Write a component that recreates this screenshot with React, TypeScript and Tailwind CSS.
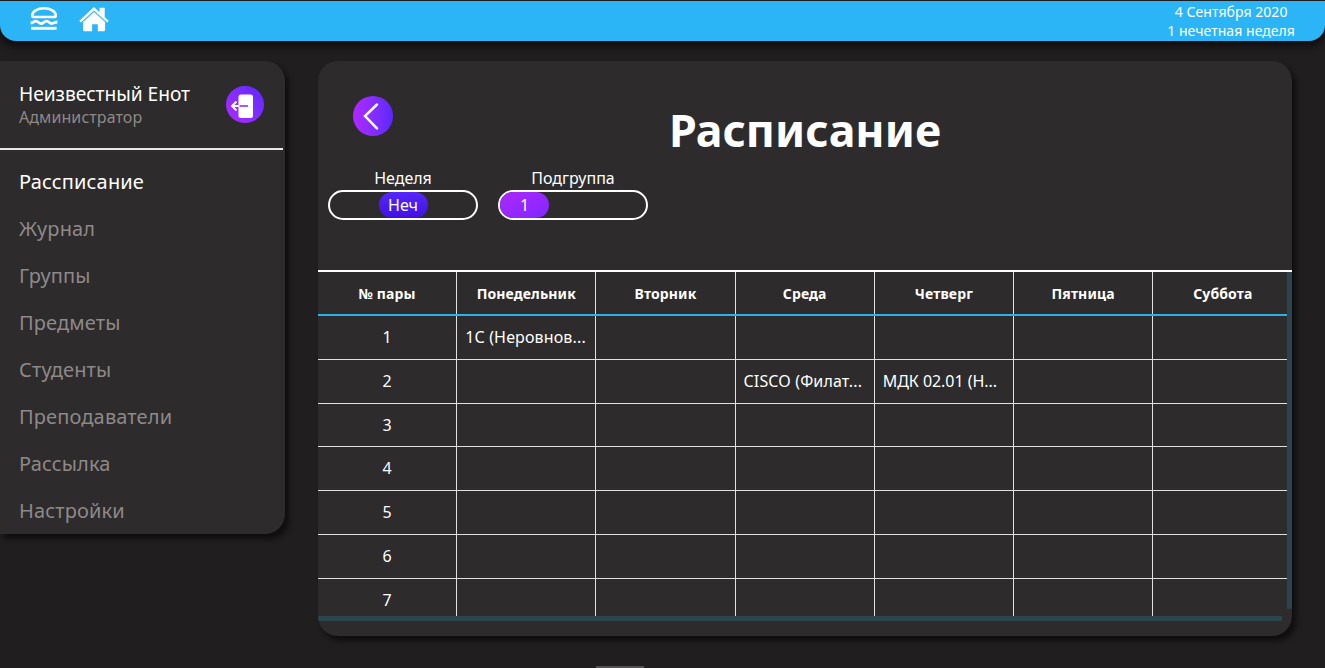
import React from 'react';

const MENU = [
  'Рассписание',
  'Журнал',
  'Группы',
  'Предметы',
  'Студенты',
  'Преподаватели',
  'Рассылка',
  'Настройки',
];

const DAYS = ['№ пары', 'Понедельник', 'Вторник', 'Среда', 'Четверг', 'Пятница', 'Суббота'];

const LESSONS: string[][] = [
  ['1С (Неровнов...', '', '', '', '', ''],
  ['', '', 'CISCO (Филат...', 'МДК 02.01 (Н...', '', ''],
  ['', '', '', '', '', ''],
  ['', '', '', '', '', ''],
  ['', '', '', '', '', ''],
  ['', '', '', '', '', ''],
  ['', '', '', '', '', ''],
];

function BurgerIcon() {
  return (
    <svg className="h-6 w-7" viewBox="0 0 28 24" fill="none" stroke="#fff">
      <path d="M2.200 9.700C2.200 5.200 7.600 2.300 14 2.300s11.800 2.900 11.800 7.400c0 .8-.6 1.300-1.500 1.300H3.700c-.9 0-1.500-.5-1.500-1.300Z" strokeWidth="2.500" />
      <path d="M.6 16.900c2.700 0 2.900-1.800 5.300-1.800s2.700 2.400 5.200 2.400 2.900-2.400 5.400-2.400 2.700 2.400 5.200 2.400c2.300 0 2.900-1.500 5.700-1.500" strokeWidth="2.800" />
      <path d="M1.200 22.300h25.400" strokeWidth="2.900" />
    </svg>
  );
}

function HomeIcon() {
  return (
    <svg className="h-[26px] w-[30px]" viewBox="0 0 30 26" fill="#fff">
      <path d="M15 1 20.500 6.200V1.700h5.200v9.300l4 3.700-1.500 1.700L15 4.600 1.800 16.400.3 14.700Z" />
      <path d="M15 6 26.100 15.900v8.100c0 .7-.5 1.200-1.200 1.200h-6.100v-7h-5.700v7H5.200c-.7 0-1.200-.5-1.200-1.200v-8.100Z" />
    </svg>
  );
}

function ExitIcon() {
  return (
    <svg className="h-[37px] w-[38px]" viewBox="0 0 38 37" fill="none">
      <rect x="12.500" y="8.500" width="14.500" height="23.500" rx="2.500" fill="#fff" />
      <path d="M13.500 20h8.500" stroke="#8126ff" strokeWidth="1.600" />
      <path d="M13 20H6M10.500 15.500 6 20l4.500 4.500" stroke="#fff" strokeWidth="1.800" />
    </svg>
  );
}

function Header() {
  return (
    <header className="relative mt-px flex h-10 shrink-0 justify-between rounded-b-[16px] bg-[#2bb5f6] pr-[30px] pl-[30px] shadow-[0_6px_6px_#110f0f]">
      <div className="flex gap-[21px] pt-[5px]">
        <BurgerIcon />
        <HomeIcon />
      </div>
      <div className="pt-px text-center text-[14px] leading-[19px] tracking-[0.05px]">
        <div>4 Сентября 2020</div>
        <div>1 нечетная неделя</div>
      </div>
    </header>
  );
}

function Sidebar() {
  return (
    <aside className="h-[473px] w-[285px] shrink-0 rounded-r-[20px] bg-[#2d2b2c] shadow-[4px_5px_5px_#100f0f]">
      <div className="flex h-[89px] w-[283px] justify-between border-b-2 border-[#e8e8e8] pr-[19px] pl-[19px]">
        <div className="pt-[20px]">
          <div className="text-[19.200px] leading-[25px] tracking-[-0.05px]">Неизвестный Енот</div>
          <div className="text-[16px] leading-[22px] tracking-[0.08px] text-[#8d8989]">Администратор</div>
        </div>
        <div className="mt-[25px] h-[37px] w-[38px] overflow-hidden rounded-full bg-linear-to-tr from-[#b026ff] to-[#5b26ff]">
          <ExitIcon />
        </div>
      </div>
      <nav className="flex flex-col pt-[8px] pl-[19px] tracking-[0.14px]">
        {MENU.map((item, i) => (
          <div
            key={item}
            className={i === 0 ? 'h-[47px] text-[20px] leading-[47px] text-white' : 'h-[47px] text-[20px] leading-[47px] text-[#8d8989]'}
          >
            {item}
          </div>
        ))}
      </nav>
    </aside>
  );
}

function Timetable() {
  return (
    <div className="flex h-[351px] flex-col border-t-2 border-white">
      <div className="flex h-[344px]">
        <div className="w-[969px] shrink-0 overflow-hidden">
          <div className="grid w-[974.4px] grid-cols-7 border-b-2 border-[#2fb0e8]">
            {DAYS.map((d) => (
              <div key={d} className="h-[42px] border-r border-[#e0e0e0] text-center text-[14px] leading-[44px] font-bold tracking-[0.12px] last:border-r-0">
                {d}
              </div>
            ))}
          </div>
          {LESSONS.map((row, r) => (
            <div key={r} className="grid h-[43.8px] w-[974.4px] grid-cols-7 border-b border-[#e0e0e0] text-[16px] leading-[43px]">
              <div className="border-r border-[#e0e0e0] text-center">{r + 1}</div>
              {row.map((cell, c) => (
                <div
                  key={c}
                  className={
                    c === 3
                      ? 'min-w-0 border-r border-[#e0e0e0] px-2 tracking-[-0.05px] whitespace-nowrap'
                      : 'min-w-0 border-r border-[#e0e0e0] px-2 tracking-[0.14px] whitespace-nowrap last:border-r-0'
                  }
                >
                  {cell}
                </div>
              ))}
            </div>
          ))}
        </div>
        <div className="h-[337px] w-[5px] bg-[#2c444e]" />
      </div>
      <div className="h-[5px] w-[964px] bg-[#2c444e]" />
    </div>
  );
}

export default function App() {
  return (
    <div className="flex h-[668px] w-[1325px] flex-col overflow-hidden bg-[#201e1f] font-['Noto_Sans',sans-serif] text-white">
      <Header />
      <div className="flex h-[625px] shrink-0 gap-[33px] pt-5">
        <Sidebar />
        <main className="flex h-[575px] w-[974px] shrink-0 flex-col overflow-hidden rounded-[20px] bg-[#2d2b2c] shadow-[4px_5px_5px_#100f0f]">
          <div className="flex h-[104px] shrink-0 pt-[35px] pl-[35px]">
            <button className="flex h-10 w-10 items-center justify-center rounded-full bg-linear-to-r from-[#b026ff] to-[#5b26ff]">
              <svg className="h-10 w-10" viewBox="0 0 40 40" fill="none" stroke="#fff" strokeWidth="2.500" strokeLinecap="round">
                <path d="M24 8.500 12 20l12 12.300" />
              </svg>
            </button>
            <h1 className="w-[824px] pt-[4px] text-center text-[44.800px] leading-[60px] font-bold">Расписание</h1>
          </div>
          <div className="flex h-[105px] shrink-0 gap-5 pl-[10px] text-center text-[16px]">
            <div className="w-[150px]">
              <div className="h-[25px] leading-[27px]">Неделя</div>
              <div className="flex h-[30px] justify-center rounded-full border-2 border-white">
                <div className="h-[26px] w-[49px] rounded-full bg-linear-to-b from-[#5527fa] to-[#4110e0] leading-[26px]">Неч</div>
              </div>
            </div>
            <div className="w-[150px]">
              <div className="h-[25px] leading-[27px]">Подгруппа</div>
              <div className="flex h-[30px] rounded-full border-2 border-white">
                <div className="h-[26px] w-[49px] rounded-full bg-linear-to-br from-[#ae26ff] to-[#8026ff] leading-[26px]">1</div>
              </div>
            </div>
          </div>
          <Timetable />
        </main>
      </div>
      <div className="ml-[596px] h-[2px] w-[48px] bg-[#535152]" />
    </div>
  );
}
